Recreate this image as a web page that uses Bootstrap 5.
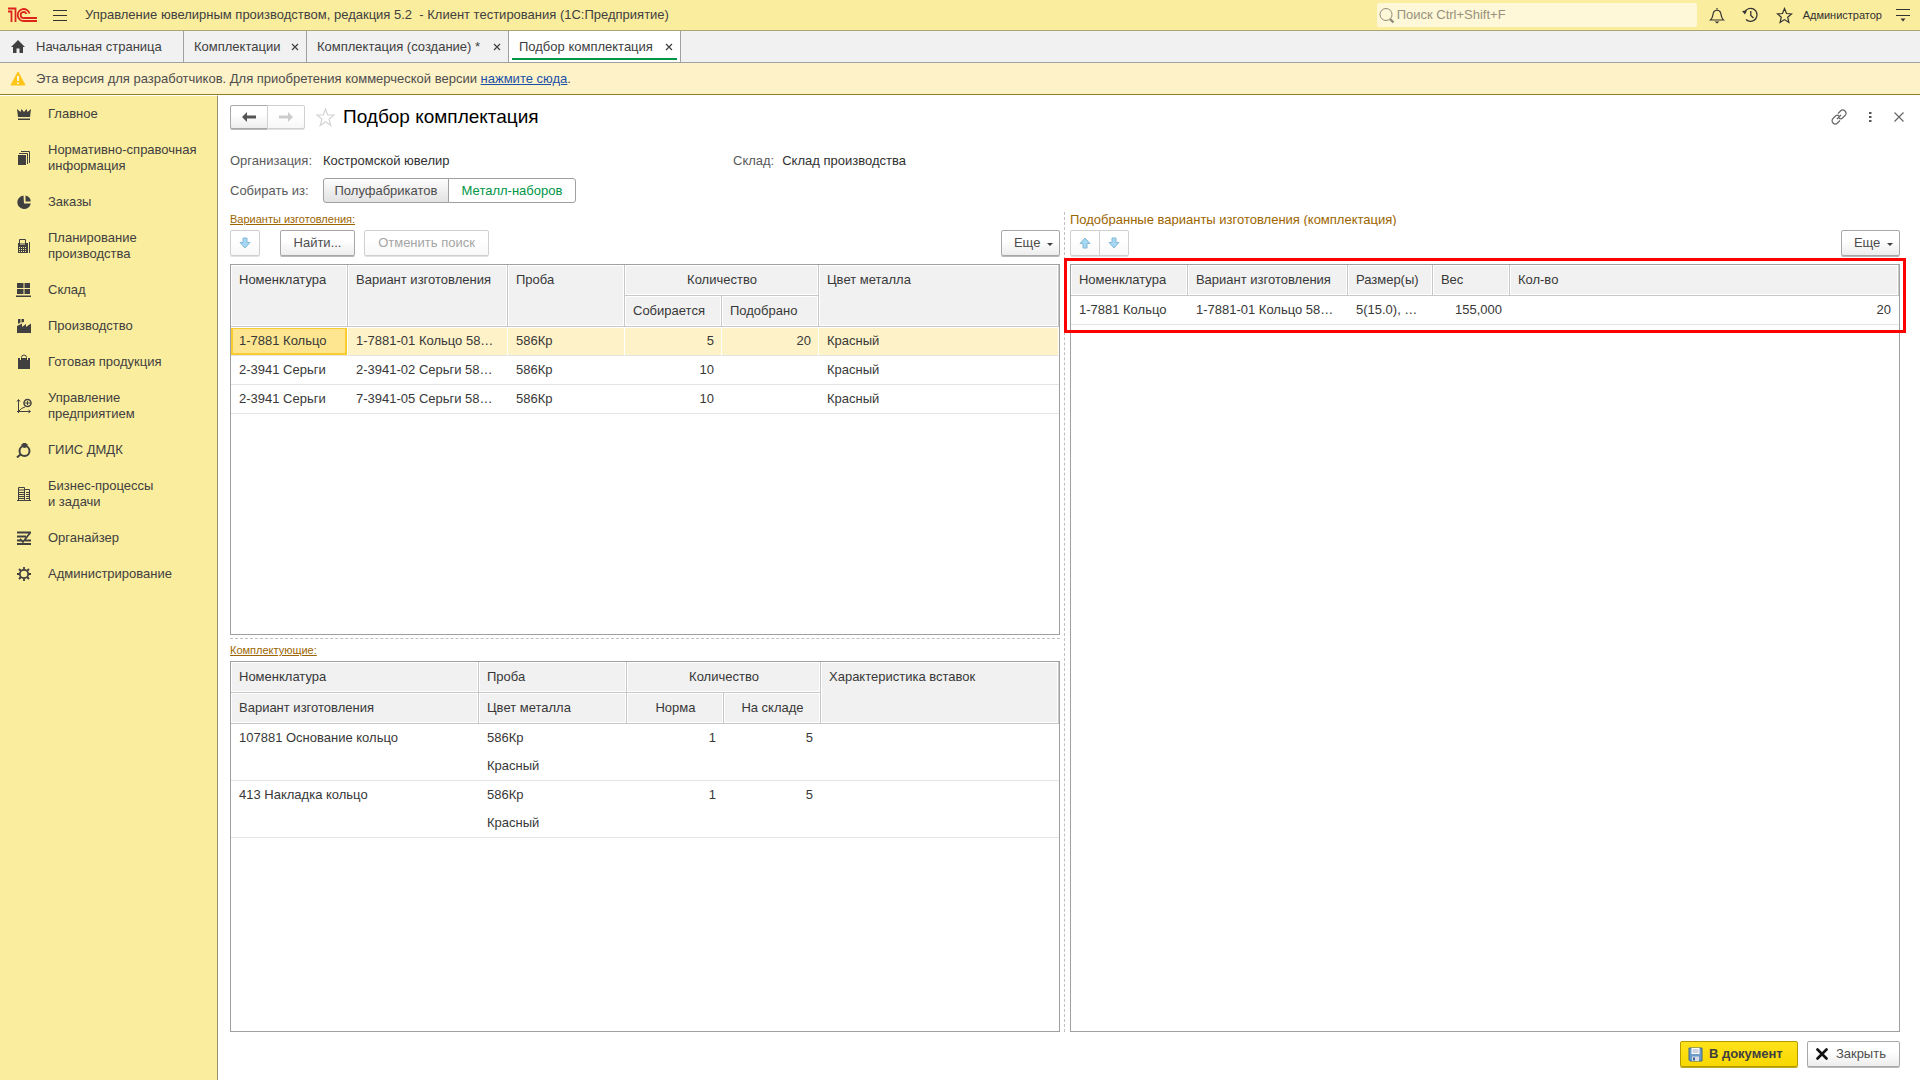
<!DOCTYPE html>
<html lang="ru">
<head>
<meta charset="utf-8">
<meta name="viewport" content="width=device-width, initial-scale=1">
<title>Подбор комплектация</title>
<link href="https://cdn.jsdelivr.net/npm/bootstrap@5.3.0/dist/css/bootstrap.min.css" rel="stylesheet">
<style>
:root { --ink:#404040; --line:#a0a0a0; --grid:#c8c8c8; --yellow:#fbed9e; --gold:#9c6500; }
body { font-family:"Liberation Sans", Arial, sans-serif; font-size:13px; line-height:16px; color:var(--ink); background:#fff; }
svg { display:block; flex:none; }
button, input { font-family:inherit; }
.app-top { background:var(--yellow); height:31px; border-bottom:1px solid #aaa574; padding-left:7px; padding-right:10px; }
.app-name { margin-left:18px; }
.icon-btn { border:0; background:none; padding:0; color:inherit; display:flex; }
.search-box { width:320px; height:24px; background:#fef7d8; border-radius:2px; color:#8f8b78; padding-left:2px; gap:2px; }
.search-box input { border:0; background:none; outline:0; font-size:13px; line-height:16px; padding:0; color:inherit; width:100%; }
.search-box input::placeholder { color:#97927c; opacity:1; }
.top-icons { gap:17px; padding-left:12px; padding-right:10px; }
.user-box { gap:14px; }
.user-name { font-size:11px; color:#303030; }
.tab-strip { background:#f1f1f1; height:32px; border-bottom:1px solid var(--line); }
.tab-item { border-right:1px solid var(--line); color:var(--ink); padding:0 7px 0 10px; height:31px; position:relative; display:flex; align-items:center; justify-content:space-between; min-width:123px; }
.tab-item.home { min-width:184px; justify-content:flex-start; gap:10px; }
.tab-item.draft { min-width:202px; }
.tab-item.current { min-width:172px; background:#fff; }
.tab-item a { color:inherit; text-decoration:none; }
.tab-item.current::after { content:""; position:absolute; left:3px; right:3px; bottom:2px; height:2px; background:#009646; }
.notice { background:#fef2c8; height:32px; border-bottom:1px solid #957f23; padding-left:10px; gap:10px; color:#4d4d4d; }
.notice a { color:#1a50a8; }
.side { width:218px; flex:none; background:var(--yellow); border-right:1px solid #95906a; border-top:1px solid #fff; }
.side a { color:var(--ink); text-decoration:none; padding:10px 12px 10px 16px; gap:16px; }
.workarea { padding:10px 20px 13px 12px; }
.page-title { font-size:19px; line-height:24px; color:#000; margin:0 0 0 8px; font-weight:400; }
.fav-btn { margin-left:11px; }
.window-icons { gap:18px; margin-right:-5px; }
.ui-btn { --bs-btn-font-size:13px; --bs-btn-line-height:16px; --bs-btn-padding-y:4px; --bs-btn-padding-x:12px; --bs-btn-border-radius:2px; --bs-btn-color:#4d4d4d; --bs-btn-border-color:#a8a8a8; --bs-btn-hover-border-color:#888; --bs-btn-disabled-color:#a5a5a5; --bs-btn-disabled-border-color:#d0d0d0; --bs-btn-disabled-opacity:1; background:linear-gradient(#fff 40%,#ededed); box-shadow:0 1px 0 #b9b9b9; height:26px; display:inline-flex; align-items:center; justify-content:center; }
.ui-btn:disabled { background:linear-gradient(#fff 40%,#f8f8f8); box-shadow:0 1px 0 #e2e2e2; }
.ui-btn.icon-only { width:30px; padding:0; }
.ui-btn.nav-btn { width:38px; height:24px; padding:0; }
.ui-btn.find { width:75px; margin-left:20px; }
.ui-btn.unfind { width:125px; margin-left:9px; }
.ui-btn.more { width:59px; padding:0 6px 0 12px; justify-content:space-between; }
.ui-btn.more svg { margin-top:4px; }
.ui-btn.main-action { background:linear-gradient(#ffe21c,#f8d800); border-color:#b39a00; box-shadow:0 1px 0 #c0aa20; font-weight:700; color:#404040; width:118px; padding:0 7px; gap:6px; justify-content:flex-start; }
.ui-btn.close-action { width:93px; padding:0 8px; gap:8px; justify-content:flex-start; }
.actions { gap:9px; margin-top:9px; }
.form-line { margin-bottom:9px; }
.form-label-cell { width:93px; color:#5a5a5a; }
.org-cell { width:410px; }
.value-text { color:#303030; }
.toggle .btn { --bs-btn-font-size:13px; --bs-btn-line-height:16px; --bs-btn-padding-y:4px; --bs-btn-padding-x:0; --bs-btn-border-color:#a0a0a0; --bs-btn-color:#4d4d4d; --bs-btn-border-radius:3px; --bs-btn-active-bg:#fff; --bs-btn-active-color:#009646; --bs-btn-active-border-color:#a0a0a0; height:25px; background:linear-gradient(#fdfdfd,#e2e2e2); width:126px; }
.toggle .btn-check:checked + .btn { background:#fff; width:128px; }
.panes { gap:4px; }
.pane { flex:1 1 0; min-width:0; }
.split-v { border-left:1px dashed #c0c0c0; margin-right:1px; }
.split-h { border-top:1px dashed #c0c0c0; margin-top:3px; }
.caption-link { font-size:11px; line-height:14px; color:var(--gold); }
.caption-text { color:var(--gold); height:14px; overflow:hidden; }
.grid-box { border:1px solid var(--line); min-height:0; flex:1 1 0; position:relative; }
.grid-box.lower { flex-basis:2px; }
.grid-table { width:100%; table-layout:fixed; border-collapse:separate; border-spacing:0; color:#383838; }
.grid-table th { font-weight:400; background:#f1f1f1; height:31px; padding:7px 7px 6px 8px; border-right:1px solid var(--grid); border-bottom:1px solid var(--grid); box-shadow:inset 0 0 0 1px #fff; vertical-align:top; white-space:nowrap; }
.grid-table td { height:29px; padding:0 8px; border-bottom:1px solid #e4e4e4; white-space:nowrap; overflow:hidden; text-overflow:ellipsis; vertical-align:middle; }
.grid-table tr.chosen td { background:#fef2c8; border-right:1px solid #fff; padding-right:7px; box-shadow:inset 0 1px 0 #fff; }
.grid-table tr.chosen td:first-child { background:#fee690; box-shadow:inset 0 1px 0 #fff, inset 0 0 0 2px #fccb2d; }
.grid-table .upper td { border-bottom:0; height:28px; }
.highlight { position:absolute; top:-7px; left:-7px; right:-7px; height:75px; border:3px solid #f00; pointer-events:none; }
</style>
</head>
<body>
<div class="d-flex flex-column min-vh-100">
<header class="app-top d-flex align-items-center">
  <svg width="30" height="16" viewBox="0 0 30 16" fill="none" stroke="#dc241c" stroke-width="1.800"><path d="M1 4.500H4.500V15M1 1.500H8.500V15"/><path d="M22.500 6.500A6 6 0 1 0 17 14H30M19.500 7A3 3 0 1 0 17 11H30"/></svg>
  <button class="icon-btn ms-3" aria-label="Меню"><svg width="14" height="13" viewBox="0 0 14 13" stroke="#333"><path d="M0 1.500H14M0 6.500H14M0 11.500H14"/></svg></button>
  <div class="app-name flex-grow-1">Управление ювелирным производством, редакция 5.2 &nbsp;- Клиент тестирования (1С:Предприятие)</div>
  <label class="search-box d-flex align-items-center">
    <svg width="16" height="17" viewBox="0 0 16 17" fill="none" stroke="#8f8b78"><circle cx="7" cy="7.500" r="6"/><path d="M11 12L14.500 15.500" stroke-width="2.400"/></svg>
    <input type="text" placeholder="Поиск Ctrl+Shift+F" aria-label="Поиск">
  </label>
  <div class="top-icons d-flex align-items-center">
    <button class="icon-btn" aria-label="Уведомления"><svg width="16" height="17" viewBox="0 0 16 17" fill="none" stroke="#333" stroke-width="1.200"><path d="M8 1V2.500M1.500 13C4 11 3.500 8.500 4.500 5.500C5.300 2.500 10.700 2.500 11.500 5.500C12.500 8.500 12 11 14.500 13Z"/><path d="M5.500 14.500H10.500L8 16.500Z" fill="#333" stroke="none"/></svg></button>
    <button class="icon-btn" aria-label="История"><svg width="17" height="16" viewBox="0 0 17 16" fill="none" stroke="#333" stroke-width="1.300"><path d="M2.500 5.500A6.500 6.500 0 1 1 4 12.500M8.800 4V8.500L11.500 11"/><path d="M0 4L5 3.500L3 7.500Z" fill="#333" stroke="none"/></svg></button>
    <button class="icon-btn" aria-label="Избранное"><svg width="17" height="17" viewBox="0 0 17 17" fill="none" stroke="#333" stroke-width="1.200"><path d="M8.500 1.500L10.500 6.500L15.500 6.900L11.700 10.200L12.900 15.500L8.500 12.600L4.100 15.500L5.300 10.200L1.500 6.900L6.500 6.500Z"/></svg></button>
  </div>
  <div class="user-box d-flex align-items-center"><span class="user-name">Администратор</span>
    <button class="icon-btn" aria-label="Настройки"><svg width="14" height="14" viewBox="0 0 14 14" fill="none" stroke="#333"><path d="M0 1.500H14M0 7.500H14"/><path d="M4.500 10.500H9.500L7 13.500Z" fill="#333" stroke="none"/></svg></button>
  </div>
</header>

<nav class="tab-strip d-flex" aria-label="Открытые окна">
  <div class="tab-item home"><svg width="16" height="14" viewBox="0 0 16 14"><path d="M8 0L15 7H13V13H9.500V8.500H6.500V13H3V7H1Z" fill="#404040"/></svg><a href="#">Начальная страница</a></div>
  <div class="tab-item"><a href="#">Комплектации</a><button class="icon-btn" aria-label="Закрыть вкладку"><svg width="8" height="8" viewBox="0 0 8 8"><path d="M1 1L7 7M7 1L1 7" stroke="#404040" stroke-width="1.200"/></svg></button></div>
  <div class="tab-item draft"><a href="#">Комплектация (создание) *</a><button class="icon-btn" aria-label="Закрыть вкладку"><svg width="8" height="8" viewBox="0 0 8 8"><path d="M1 1L7 7M7 1L1 7" stroke="#404040" stroke-width="1.200"/></svg></button></div>
  <div class="tab-item current"><a href="#">Подбор комплектация</a><button class="icon-btn" aria-label="Закрыть вкладку"><svg width="8" height="8" viewBox="0 0 8 8"><path d="M1 1L7 7M7 1L1 7" stroke="#404040" stroke-width="1.200"/></svg></button></div>
</nav>

<div class="notice d-flex align-items-center">
  <svg width="16" height="15" viewBox="0 0 16 15"><path d="M8 1L15 14H1Z" fill="#ffc61a" stroke="#ffc61a" stroke-linejoin="round"/><path d="M8 5V10M8 11.500V13" stroke="#fff" stroke-width="1.600"/></svg>
  <span>Эта версия для разработчиков. Для приобретения коммерческой версии <a href="#">нажмите сюда</a>.</span>
</div>

<div class="d-flex flex-grow-1">
<nav class="side" aria-label="Разделы">
 <ul class="list-unstyled mb-0">
  <li><a class="d-flex align-items-center" href="#"><svg width="16" height="16" viewBox="0 0 16 16" fill="#404040"><path d="M1 3L4.500 6L5.500 3L8 6L10.500 3L11.500 6L15 3L14 11H2ZM2 12.500H14V14H2Z"/></svg><span>Главное</span></a></li>
  <li><a class="d-flex align-items-center" href="#"><svg width="16" height="16" viewBox="0 0 16 16"><path d="M2 5H10V15H2Z" fill="#404040"/><path d="M3 3.500H11.500V14M5 1.500H13.500V13" fill="none" stroke="#404040"/></svg><span>Нормативно-справочная<br>информация</span></a></li>
  <li><a class="d-flex align-items-center" href="#"><svg width="16" height="16" viewBox="0 0 16 16" fill="#404040"><path d="M7.500 1.500A6.800 6.800 0 1 0 14.800 9.500H8ZM9.500 1.500V7.500H14.700A6 6 0 0 0 9.500 1.500Z"/></svg><span>Заказы</span></a></li>
  <li><a class="d-flex align-items-center" href="#"><svg width="16" height="16" viewBox="0 0 16 16"><path d="M3.500 6V1.500H9.500V6M13.500 4V15" fill="none" stroke="#404040"/><path d="M2 5H12V15H2Z" fill="#404040"/><path d="M4 6H9" stroke="#fbed9e"/><path d="M3 9.500H11M3 11.500H11M3 13.500H11" stroke="#fbed9e" stroke-dasharray="1 1"/></svg><span>Планирование<br>производства</span></a></li>
  <li><a class="d-flex align-items-center" href="#"><svg width="16" height="16" viewBox="0 0 16 16" fill="#404040"><path d="M1 1H7.500V6H1ZM8.500 1H14V6H8.500ZM1 7H7.500V12H1ZM8.500 7H14V12H8.500ZM0 13.500H15V15H0Z"/></svg><span>Склад</span></a></li>
  <li><a class="d-flex align-items-center" href="#"><svg width="16" height="16" viewBox="0 0 16 16" fill="#404040"><path d="M1 15V8L6 5.500V9L10 6V9L15 5.500V15ZM2 1H4.500V4.500L2 6ZM5.500 1H8V4L5.500 4.500Z"/></svg><span>Производство</span></a></li>
  <li><a class="d-flex align-items-center" href="#"><svg width="16" height="16" viewBox="0 0 16 16"><path d="M2 4H14V15H2Z" fill="#404040"/><path d="M4.500 6V4A3.500 3.500 0 0 1 11.500 4V6" fill="none" stroke="#fbed9e"/><path d="M5.500 6V3.500A2.500 2.500 0 0 1 10.500 3.500V6" fill="none" stroke="#404040"/></svg><span>Готовая продукция</span></a></li>
  <li><a class="d-flex align-items-center" href="#"><svg width="16" height="16" viewBox="0 0 16 16" fill="none" stroke="#404040"><path d="M2.500 15V2M1 3.500L2.500 1.500L4 3.500M1 13.500H14M12.500 12L14.500 13.500L12.500 15M3 13L5.500 10.500L9 9"/><circle cx="11.500" cy="5" r="3.500" stroke-width="1.500"/><path d="M9 5H14M11.500 3V7"/></svg><span>Управление<br>предприятием</span></a></li>
  <li><a class="d-flex align-items-center" href="#"><svg width="16" height="16" viewBox="0 0 16 16" fill="none" stroke="#404040"><circle cx="8.500" cy="9" r="5" stroke-width="2"/><path d="M5 12L1 15.500" stroke-width="2"/><path d="M5.500 3L7 1.500H10L11.500 3L8.500 6Z" fill="#404040"/></svg><span>ГИИС ДМДК</span></a></li>
  <li><a class="d-flex align-items-center" href="#"><svg width="16" height="16" viewBox="0 0 16 16" fill="none" stroke="#404040"><path d="M2.500 15V1.500H8.500V15M8.500 3.500H13.500V15M1 14.500H15M3 4H8M3 6.500H8M3 8.500H8M3 10.500H8M3 12.500H8M10 6.500H13M10 8.500H13M10 10.500H13M10 12.500H13"/></svg><span>Бизнес-процессы<br>и задачи</span></a></li>
  <li><a class="d-flex align-items-center" href="#"><svg width="16" height="16" viewBox="0 0 16 16" fill="none" stroke="#404040" stroke-width="1.800"><path d="M1 2.500H15M1 6.500H10M1 10.500H5M9 10.500H15M1 14H15M4 9L7 12L14 3"/></svg><span>Органайзер</span></a></li>
  <li><a class="d-flex align-items-center" href="#"><svg width="16" height="16" viewBox="0 0 16 16" fill="none" stroke="#404040"><circle cx="8" cy="8" r="4.200" stroke-width="1.800"/><path d="M8 1V4M8 12V15M1 8H4M12 8H15M3 3L5 5M11 11L13 13M3 13L5 11M11 5L13 3" stroke-width="1.800"/></svg><span>Администрирование</span></a></li>
 </ul>
</nav>

<main class="workarea flex-grow-1 d-flex flex-column">
  <div class="d-flex align-items-center mb-4">
    <div class="btn-group">
      <button class="btn ui-btn nav-btn" aria-label="Назад"><svg width="14" height="10" viewBox="0 0 14 10"><path d="M0 5L5 0V3.500H14V6.500H5V10Z" fill="#555"/></svg></button>
      <button class="btn ui-btn nav-btn" disabled aria-label="Вперед"><svg width="14" height="10" viewBox="0 0 14 10"><path d="M14 5L9 0V3.500H0V6.500H9V10Z" fill="#ccc"/></svg></button>
    </div>
    <button class="icon-btn fav-btn" aria-label="В избранное"><svg width="19" height="19" viewBox="0 0 19 19" fill="none" stroke="#d4d4d4" stroke-width="1.200"><path d="M9.500 1L11.700 7H18L13 11L14.800 17.500L9.500 13.800L4.200 17.500L6 11L1 7H7.300Z"/></svg></button>
    <h1 class="page-title flex-grow-1">Подбор комплектация</h1>
    <div class="window-icons d-flex align-items-center">
      <button class="icon-btn" aria-label="Ссылка"><svg width="16" height="16" viewBox="0 0 16 16" fill="none" stroke="#666" stroke-width="1.200"><path d="M7 4.500L9.500 2A3 3 0 0 1 14 6.500L11.500 9C10.500 10 9 10 8 9M9 11.500L6.500 14A3 3 0 0 1 2 9.500L4.500 7C5.500 6 7 6 8 7M6 10L10 6"/></svg></button>
      <button class="icon-btn" aria-label="Дополнительно"><svg width="10" height="12" viewBox="0 0 10 12" fill="#555"><path d="M4 1H6.500V3H4ZM4 5H6.500V7H4ZM4 9H6.500V11H4Z"/></svg></button>
      <button class="icon-btn" aria-label="Закрыть"><svg width="12" height="12" viewBox="0 0 12 12"><path d="M1.500 1.500L10.500 10.500M10.500 1.500L1.500 10.500" stroke="#666" stroke-width="1.200"/></svg></button>
    </div>
  </div>
  <div class="form-line d-flex">
    <span class="form-label-cell">Организация:</span><span class="org-cell value-text">Костромской ювелир</span>
    <span class="form-label-cell w-auto me-2">Склад:</span><span class="value-text">Склад производства</span>
  </div>
  <div class="form-line d-flex align-items-center">
    <span class="form-label-cell">Собирать из:</span>
    <div class="btn-group toggle" role="group" aria-label="Собирать из">
      <input class="btn-check" type="radio" name="source" id="srcSemi"><label class="btn" for="srcSemi">Полуфабрикатов</label>
      <input class="btn-check" type="radio" name="source" id="srcMetal" checked><label class="btn" for="srcMetal">Металл-наборов</label>
    </div>
  </div>

  <div class="panes d-flex flex-grow-1">
    <section class="pane d-flex flex-column">
      <div class="d-flex"><a class="caption-link" href="#">Варианты изготовления:</a></div>
      <div class="d-flex mt-1 mb-2">
        <button class="btn ui-btn icon-only" disabled aria-label="Переместить вниз"><svg width="12" height="12" viewBox="0 0 12 12"><path d="M4 1H8V5.500H11L6 11L1 5.500H4Z" fill="#a4d8f5" stroke="#87b8d4"/></svg></button>
        <button class="btn ui-btn find">Найти...</button>
        <button class="btn ui-btn unfind" disabled>Отменить поиск</button>
        <button class="btn ui-btn more ms-auto">Еще <svg width="6" height="4" viewBox="0 0 6 4"><path d="M0 0H6L3 3Z" fill="#404040"/></svg></button>
      </div>
      <div class="grid-box">
        <table class="grid-table">
          <colgroup><col style="width:117px"><col style="width:160px"><col style="width:117px"><col style="width:97px"><col style="width:97px"><col></colgroup>
          <thead>
            <tr><th rowspan="2">Номенклатура</th><th rowspan="2">Вариант изготовления</th><th rowspan="2">Проба</th><th colspan="2" class="text-center">Количество</th><th rowspan="2">Цвет металла</th></tr>
            <tr><th>Собирается</th><th>Подобрано</th></tr>
          </thead>
          <tbody>
            <tr class="chosen"><td>1-7881 Кольцо</td><td>1-7881-01 Кольцо 58…</td><td>586Кр</td><td class="text-end">5</td><td class="text-end">20</td><td>Красный</td></tr>
            <tr><td>2-3941 Серьги</td><td>2-3941-02 Серьги 58…</td><td>586Кр</td><td class="text-end">10</td><td></td><td>Красный</td></tr>
            <tr><td>2-3941 Серьги</td><td>7-3941-05 Серьги 58…</td><td>586Кр</td><td class="text-end">10</td><td></td><td>Красный</td></tr>
          </tbody>
        </table>
      </div>
      <div class="split-h"></div>
      <div class="d-flex pt-1 mb-1"><a class="caption-link" href="#">Комплектующие:</a></div>
      <div class="grid-box lower">
        <table class="grid-table">
          <colgroup><col style="width:248px"><col style="width:148px"><col style="width:97px"><col style="width:97px"><col></colgroup>
          <thead>
            <tr><th>Номенклатура</th><th>Проба</th><th colspan="2" class="text-center">Количество</th><th rowspan="2">Характеристика вставок</th></tr>
            <tr><th>Вариант изготовления</th><th>Цвет металла</th><th class="text-center">Норма</th><th class="text-center">На складе</th></tr>
          </thead>
          <tbody>
            <tr class="upper"><td>107881 Основание кольцо</td><td>586Кр</td><td class="text-end">1</td><td class="text-end">5</td><td></td></tr>
            <tr><td></td><td>Красный</td><td></td><td></td><td></td></tr>
            <tr class="upper"><td>413 Накладка кольцо</td><td>586Кр</td><td class="text-end">1</td><td class="text-end">5</td><td></td></tr>
            <tr><td></td><td>Красный</td><td></td><td></td><td></td></tr>
          </tbody>
        </table>
      </div>
    </section>
    <div class="split-v"></div>
    <section class="pane d-flex flex-column">
      <div class="caption-text">Подобранные варианты изготовления (комплектация)</div>
      <div class="d-flex mt-1 mb-2">
        <div class="btn-group">
          <button class="btn ui-btn icon-only" disabled aria-label="Переместить вверх"><svg width="12" height="12" viewBox="0 0 12 12"><path d="M4 11H8V6.500H11L6 1L1 6.500H4Z" fill="#a4d8f5" stroke="#87b8d4"/></svg></button>
          <button class="btn ui-btn icon-only" disabled aria-label="Переместить вниз"><svg width="12" height="12" viewBox="0 0 12 12"><path d="M4 1H8V5.500H11L6 11L1 5.500H4Z" fill="#a4d8f5" stroke="#87b8d4"/></svg></button>
        </div>
        <button class="btn ui-btn more ms-auto">Еще <svg width="6" height="4" viewBox="0 0 6 4"><path d="M0 0H6L3 3Z" fill="#404040"/></svg></button>
      </div>
      <div class="grid-box">
        <table class="grid-table">
          <colgroup><col style="width:117px"><col style="width:160px"><col style="width:85px"><col style="width:77px"><col></colgroup>
          <thead><tr><th>Номенклатура</th><th>Вариант изготовления</th><th>Размер(ы)</th><th>Вес</th><th>Кол-во</th></tr></thead>
          <tbody><tr><td>1-7881 Кольцо</td><td>1-7881-01 Кольцо 58…</td><td>5(15.0), …</td><td class="text-end">155,000</td><td class="text-end">20</td></tr></tbody>
        </table>
        <div class="highlight"></div>
      </div>
    </section>
  </div>

  <div class="actions d-flex justify-content-end">
    <button class="btn ui-btn main-action"><svg width="15" height="15" viewBox="0 0 15 15"><path d="M1 1H14V14H2L1 13Z" fill="#6c9bc8" stroke="#41678f"/><path d="M3.500 1H11.500V7H3.500Z" fill="#fff"/><path d="M4.500 3H10.500M4.500 5H10.500" stroke="#9ab"/><path d="M4 9.500H11V14H4Z" fill="#d5dde6"/><path d="M5 10.500H7V13.500H5Z" fill="#41678f"/></svg>В документ</button>
    <button class="btn ui-btn close-action"><svg width="12" height="12" viewBox="0 0 12 12"><path d="M1.500 1.500L10.500 10.500M10.500 1.500L1.500 10.500" stroke="#111" stroke-width="2.600" stroke-linecap="round"/></svg>Закрыть</button>
  </div>
</main>
</div>
</div>
<script src="https://cdn.jsdelivr.net/npm/bootstrap@5.3.0/dist/js/bootstrap.bundle.min.js"></script>
</body>
</html>
